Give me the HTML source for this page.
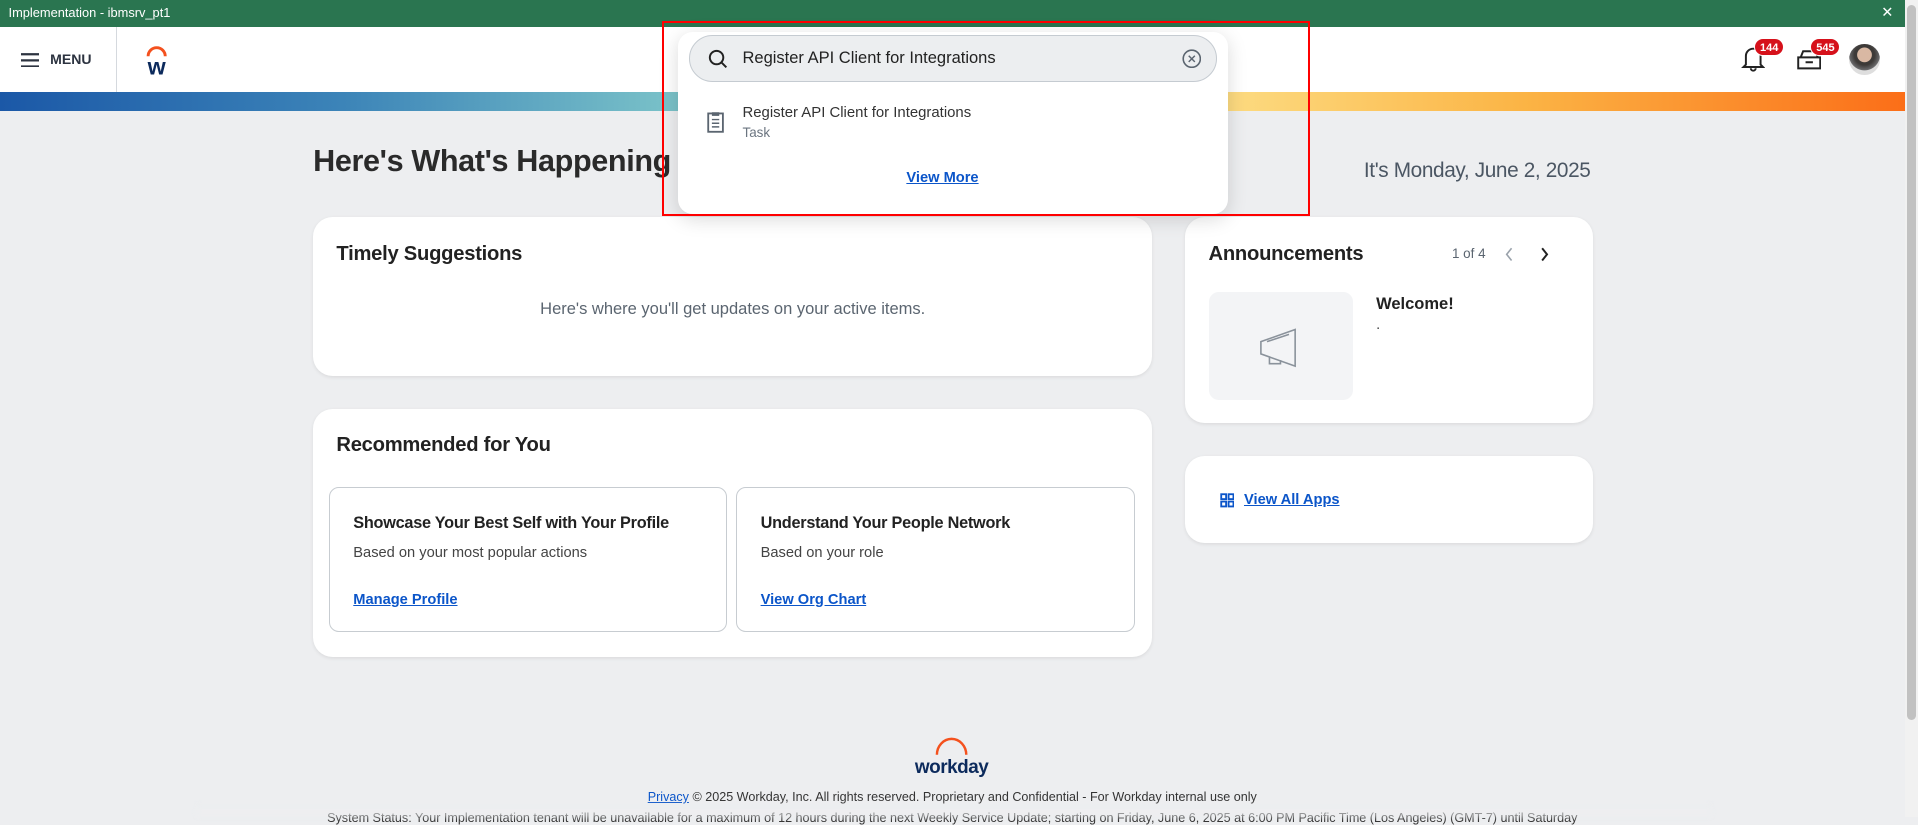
<!DOCTYPE html>
<html><head><meta charset="utf-8">
<style>
html{zoom:1.22321}
*{box-sizing:border-box;margin:0;padding:0}
body{width:1568px;height:668px;overflow:hidden;background:#edeef0;font-family:"Liberation Sans",sans-serif;color:#333;position:relative}
.a{position:absolute}
.card{position:absolute;background:#fff;border-radius:16px;box-shadow:0 1px 3px rgba(0,0,0,.08)}
.h{font-weight:bold;font-size:16.5px;color:#222;letter-spacing:-0.2px}
.lnk{color:#0b55c9;font-weight:bold;text-decoration:underline;font-size:12px}
.inner{position:absolute;border:1px solid #c7ccd1;border-radius:8px;background:#fff}
.badge{position:absolute;background:#d6111b;color:#fff;font-size:9px;font-weight:bold;border-radius:9px;height:15px;line-height:15px;padding:0 4px;border:1px solid #fff}
</style></head><body>
<div class="a" style="left:0;top:0;width:1557px;height:22px;background:#2a7550;color:#fff;font-size:10.5px;line-height:22px;padding-left:7px">Implementation - ibmsrv_pt1<span class="a" style="left:1538px;top:0;font-size:12px">✕</span></div>
<div class="a" style="left:1557px;top:0;width:11px;height:668px;background:#f1f1f1"><div style="margin:4px 2px;height:585px;background:#c1c1c1;border-radius:4px"></div></div>
<div class="a" style="left:0;top:22px;width:1557px;height:53px;background:#fff"></div>
<div class="a" style="left:95px;top:22px;width:1px;height:53px;background:#d5d9de"></div>
<svg class="a" style="left:17px;top:43px" width="15" height="12"><path d="M0 1h15M0 6h15M0 11h15" stroke="#2c3340" stroke-width="1.8"/></svg>
<div class="a" style="left:41px;top:42px;font-size:11.5px;font-weight:bold;color:#2c3340">MENU</div>
<svg class="a" style="left:116px;top:36px" width="24" height="28"><path d="M5 10 A7 7 0 0 1 19 10" fill="none" stroke="#f4511e" stroke-width="2.4"/><text x="12" y="25" text-anchor="middle" font-family="Liberation Sans" font-weight="bold" font-size="19" fill="#0c2a5c">w</text></svg>
<div class="a" style="left:0;top:75px;width:1557px;height:16px;background:linear-gradient(90deg,#1b58a7 0%,#3c84b8 18%,#7cc4c9 36%,#fde18a 62%,#fbb445 80%,#fb6e18 100%)"></div>

<div class="a" style="left:256px;top:118px;font-size:25px;font-weight:bold;color:#2a2a2a;letter-spacing:-0.3px">Here's What's Happening</div>
<div class="a" style="left:1115px;top:130px;font-size:17px;color:#4b5663;letter-spacing:-0.3px">It's Monday, June 2, 2025</div>

<div class="card" style="left:256px;top:177px;width:686px;height:130px">
<div class="a h" style="left:19px;top:22px">Timely Suggestions</div>
<div class="a" style="left:0;width:686px;top:68px;text-align:center;font-size:13.5px;color:#5b6570">Here's where you'll get updates on your active items.</div></div>

<div class="card" style="left:256px;top:334px;width:686px;height:203px">
<div class="a h" style="left:19px;top:21px">Recommended for You</div>
<div class="inner" style="left:13px;top:64px;width:325px;height:119px">
<div class="a" style="left:19px;top:21px;font-size:13.3px;font-weight:bold;color:#222;letter-spacing:-0.2px">Showcase Your Best Self with Your Profile</div>
<div class="a" style="left:19px;top:47px;font-size:12px;color:#444">Based on your most popular actions</div>
<div class="a lnk" style="left:19px;top:85px">Manage Profile</div></div>
<div class="inner" style="left:346px;top:64px;width:326px;height:119px">
<div class="a" style="left:19px;top:21px;font-size:13.3px;font-weight:bold;color:#222;letter-spacing:-0.2px">Understand Your People Network</div>
<div class="a" style="left:19px;top:47px;font-size:12px;color:#444">Based on your role</div>
<div class="a lnk" style="left:19px;top:85px">View Org Chart</div></div></div>

<div class="card" style="left:969px;top:177px;width:333px;height:169px">
<div class="a h" style="left:19px;top:22px">Announcements</div>
<div class="a" style="left:218px;top:24px;font-size:11px;color:#5b6570">1 of 4</div>
<svg class="a" style="left:260px;top:25px" width="40" height="12"><path d="M7 1L3 6l4 5" fill="none" stroke="#9aa2ab" stroke-width="1.3"/><path d="M32 1l4 5-4 5" fill="none" stroke="#222" stroke-width="1.6"/></svg>
<div class="a" style="left:19px;top:62px;width:118px;height:88px;background:#f3f4f6;border-radius:8px"></div>
<svg class="a" style="left:58px;top:90px" width="40" height="36"><path d="M4 12l28-10v30L4 22z M4 12v10 M11 24v6h9v-3 M9 12l18-6" fill="none" stroke="#8a929b" stroke-width="1.3"/></svg>
<div class="a" style="left:156px;top:64px;font-size:13.5px;font-weight:bold;color:#222">Welcome!</div>
<div class="a" style="left:156px;top:82px;font-size:12px;color:#444">.</div></div>

<div class="card" style="left:969px;top:373px;width:333px;height:71px">
<svg class="a" style="left:28px;top:30px" width="12" height="12"><g fill="none" stroke="#0b55c9" stroke-width="1.5"><rect x="1" y="1" width="4" height="4"/><rect x="7" y="1" width="4" height="4"/><rect x="1" y="7" width="4" height="4"/><rect x="7" y="7" width="4" height="4"/></g></svg>
<div class="a lnk" style="left:48px;top:29px">View All Apps</div></div>

<svg class="a" style="left:744px;top:600px" width="70" height="36"><path d="M22 17 A12 13 0 0 1 46 17" fill="none" stroke="#f4511e" stroke-width="2"/><text x="34" y="32" text-anchor="middle" font-family="Liberation Sans" font-size="15.5" font-weight="bold" fill="#0c2a5c" letter-spacing="-0.4">workday</text></svg>
<div class="a" style="left:0;width:1557px;top:646px;text-align:center;font-size:10.3px;color:#333"><span style="color:#0b55c9;text-decoration:underline">Privacy</span> © 2025 Workday, Inc. All rights reserved. Proprietary and Confidential - For Workday internal use only</div>
<div class="a" style="left:0;width:1557px;top:663px;text-align:center;font-size:10.3px;color:#333;white-space:nowrap">System Status: Your Implementation tenant will be unavailable for a maximum of 12 hours during the next Weekly Service Update; starting on Friday, June 6, 2025 at 6:00 PM Pacific Time (Los Angeles) (GMT-7) until Saturday</div>
<div class="a" style="left:160px;top:655px;width:1240px;height:13px;background:linear-gradient(180deg,rgba(237,238,240,0),rgba(237,238,240,.75));filter:blur(2px)"></div>

<svg class="a" style="left:1423px;top:37px" width="20" height="22"><path d="M4 16V9a6 6 0 0 1 12 0v7l2 2H2z M8 19a2 2 0 0 0 4 0" fill="none" stroke="#222" stroke-width="1.6"/></svg>
<div class="badge" style="left:1434px;top:31px">144</div>
<svg class="a" style="left:1469px;top:41px" width="20" height="16"><path d="M1 6h18v9H1z M3 6l2-5h10l2 5 M7 10h6" fill="none" stroke="#222" stroke-width="1.6"/></svg>
<div class="badge" style="left:1480px;top:31px">545</div>
<div class="a" style="left:1512px;top:36px;width:25px;height:25px;border-radius:50%;background:radial-gradient(circle at 50% 35%,#d9b8a3 0 28%,#3d3a38 30% 40%,#6b6b6d 60%,#dedede 62%)"></div>

<div class="a" style="left:554px;top:26px;width:450px;height:149px;background:#fff;border-radius:12px;box-shadow:0 4px 16px rgba(0,0,0,.15)"></div>
<div class="a" style="left:563px;top:29px;width:432px;height:38px;background:#eceef0;border:1px solid #c5cbd1;border-radius:20px"></div>
<svg class="a" style="left:579px;top:40px" width="16" height="16"><circle cx="7" cy="7" r="5.5" fill="none" stroke="#222" stroke-width="1.6"/><path d="M11 11l4 4" stroke="#222" stroke-width="1.6"/></svg>
<div class="a" style="left:607px;top:40px;font-size:13.5px;color:#222">Register API Client for Integrations</div>
<svg class="a" style="left:966px;top:40px" width="16" height="16"><circle cx="8" cy="8" r="7" fill="none" stroke="#5b6570" stroke-width="1.3"/><path d="M5.5 5.5l5 5M10.5 5.5l-5 5" stroke="#5b6570" stroke-width="1.2"/></svg>
<svg class="a" style="left:578px;top:91px" width="14" height="18"><rect x="1" y="2" width="12" height="15" fill="none" stroke="#5b6570" stroke-width="1.5"/><path d="M4 1h6v3H4z" fill="#5b6570"/><path d="M4 7h6M4 10h6M4 13h6" stroke="#5b6570" stroke-width="1.2"/></svg>
<div class="a" style="left:607px;top:85px;font-size:12.2px;color:#333">Register API Client for Integrations</div>
<div class="a" style="left:607px;top:102px;font-size:11px;color:#6b7580">Task</div>
<div class="a lnk" style="left:554px;width:433px;top:139px;text-align:center">View More</div>
<div class="a" style="left:541px;top:17px;width:530px;height:160px;border:2px solid #f00"></div>
</body></html>
